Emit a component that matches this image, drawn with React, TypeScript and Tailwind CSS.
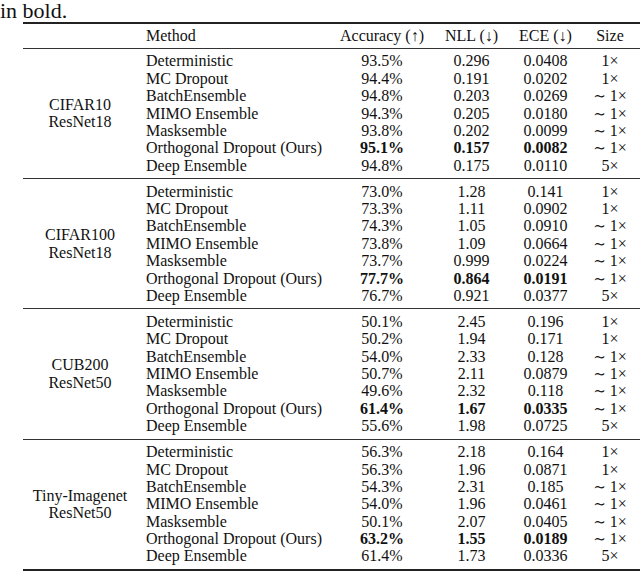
import React from "react";

type Row = { m: string; a: string; n: string; e: string; s: string; b?: boolean };
type Group = { d: string; net: string; rows: Row[] };

const methods = [
  "Deterministic",
  "MC Dropout",
  "BatchEnsemble",
  "MIMO Ensemble",
  "Masksemble",
  "Orthogonal Dropout (Ours)",
  "Deep Ensemble",
];
const sizes = ["1", "1", "~", "~", "~", "~", "5"];

function mk(vals: [string, string, string][]): Row[] {
  return vals.map((v, i) => ({ m: methods[i], a: v[0], n: v[1], e: v[2], s: sizes[i], b: i === 5 }));
}

const groups: Group[] = [
  {
    d: "CIFAR10",
    net: "ResNet18",
    rows: mk([
      ["93.5%", "0.296", "0.0408"],
      ["94.4%", "0.191", "0.0202"],
      ["94.8%", "0.203", "0.0269"],
      ["94.3%", "0.205", "0.0180"],
      ["93.8%", "0.202", "0.0099"],
      ["95.1%", "0.157", "0.0082"],
      ["94.8%", "0.175", "0.0110"],
    ]),
  },
  {
    d: "CIFAR100",
    net: "ResNet18",
    rows: mk([
      ["73.0%", "1.28", "0.141"],
      ["73.3%", "1.11", "0.0902"],
      ["74.3%", "1.05", "0.0910"],
      ["73.8%", "1.09", "0.0664"],
      ["73.7%", "0.999", "0.0224"],
      ["77.7%", "0.864", "0.0191"],
      ["76.7%", "0.921", "0.0377"],
    ]),
  },
  {
    d: "CUB200",
    net: "ResNet50",
    rows: mk([
      ["50.1%", "2.45", "0.196"],
      ["50.2%", "1.94", "0.171"],
      ["54.0%", "2.33", "0.128"],
      ["50.7%", "2.11", "0.0879"],
      ["49.6%", "2.32", "0.118"],
      ["61.4%", "1.67", "0.0335"],
      ["55.6%", "1.98", "0.0725"],
    ]),
  },
  {
    d: "Tiny-Imagenet",
    net: "ResNet50",
    rows: mk([
      ["56.3%", "2.18", "0.164"],
      ["56.3%", "1.96", "0.0871"],
      ["54.3%", "2.31", "0.185"],
      ["54.0%", "1.96", "0.0461"],
      ["50.1%", "2.07", "0.0405"],
      ["63.2%", "1.55", "0.0189"],
      ["61.4%", "1.73", "0.0336"],
    ]),
  },
];

function SizeCell({ s }: { s: string }) {
  if (s === "~") {
    return (
      <span className="whitespace-nowrap">
        <span className="font-['DejaVu_Serif',serif] text-[15px] mr-[4px]">∼</span>1×
      </span>
    );
  }
  return <span className="whitespace-nowrap">{s}×</span>;
}

export default function App() {
  return (
    <div className="w-[640px] h-[573px] bg-white text-[#111] font-['Liberation_Serif','Times_New_Roman',serif] overflow-hidden">
      <div className="h-[22px] leading-[21px] text-[22px] whitespace-nowrap">in bold.</div>
      <div className="ml-[23px] w-[617px]">
        <div className="h-[2px] bg-[#222]" />
        <div className="flex pt-[2.5px] pb-[4px] text-[16px] leading-[17.4px]">
          <div className="w-[114px]" />
          <div className="grid grid-cols-[193px_104px_75px_73px_56px]">
            <div className="pl-[9px]">Method</div>
            <div className="text-center whitespace-nowrap">Accuracy (↑)</div>
            <div className="text-center whitespace-nowrap">NLL (↓)</div>
            <div className="text-center whitespace-nowrap">ECE (↓)</div>
            <div className="text-center">Size</div>
          </div>
        </div>
        <div className="h-[1px] bg-[#333]" />
        {groups.map((g, gi) => (
          <div key={g.d}>
            <div className="flex pt-[3.5px] pb-[4px] text-[16px] leading-[17.4px]">
              <div className="w-[114px] flex flex-col justify-center items-center text-center">
                <div>{g.d}</div>
                <div>{g.net}</div>
              </div>
              <div className="flex flex-col">
                {g.rows.map((r) => (
                  <div key={r.m} className="grid grid-cols-[193px_104px_75px_73px_56px] h-[17.4px]">
                    <div className="pl-[9px] whitespace-nowrap">{r.m}</div>
                    <div className={r.b ? "text-center font-bold" : "text-center"}>{r.a}</div>
                    <div className={r.b ? "text-center font-bold" : "text-center"}>{r.n}</div>
                    <div className={r.b ? "text-center font-bold" : "text-center"}>{r.e}</div>
                    <div className="text-center">
                      <SizeCell s={r.s} />
                    </div>
                  </div>
                ))}
              </div>
            </div>
            {gi < groups.length - 1 ? (
              <div className="h-[1px] bg-[#333]" />
            ) : (
              <div className="h-[2px] bg-[#222]" />
            )}
          </div>
        ))}
      </div>
    </div>
  );
}
